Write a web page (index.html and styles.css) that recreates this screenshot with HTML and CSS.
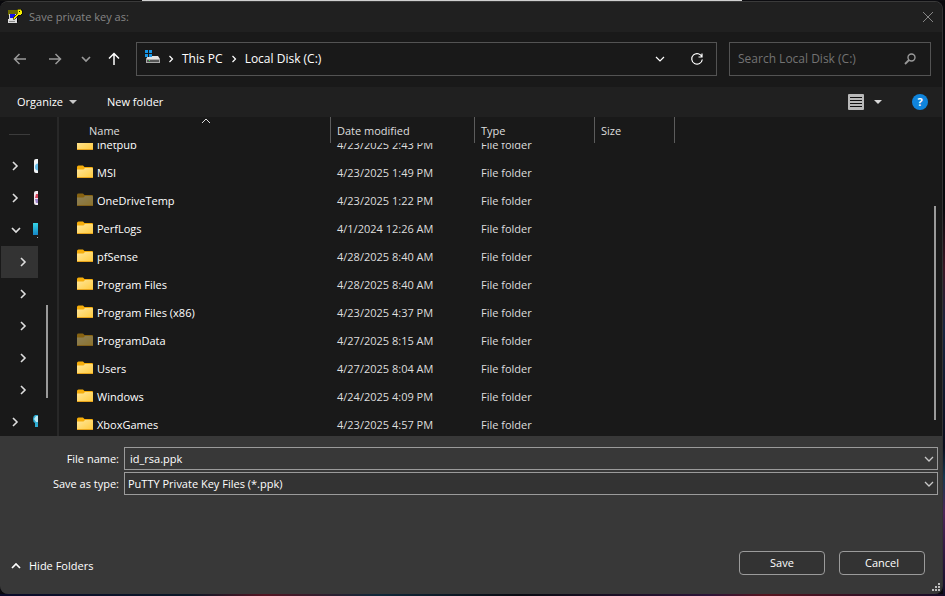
FILE: index.html
```html
<!DOCTYPE html>
<html lang="en">
<head>
<meta charset="utf-8">
<title>Save private key as:</title>
<link rel="stylesheet" href="styles.css">
</head>
<body>
<svg class="defs" width="0" height="0" aria-hidden="true">
  <defs>
    <linearGradient id="gold" x1="0" y1="0" x2="1" y2="1"><stop offset="0" stop-color="#ffe69b"/><stop offset="1" stop-color="#ffcb3d"/></linearGradient>
    <linearGradient id="screen" x1="0" y1="0" x2="0" y2="1"><stop offset="0" stop-color="#35d5e6"/><stop offset="1" stop-color="#1585c5"/></linearGradient>
    <symbol id="folder" viewBox="0 0 16 14"><path d="M0 2a1.500 1.500 0 0 1 1.500-1.500H6l1.500 1.500H15a1 1 0 0 1 1 1V12H0z" fill="#f5ad0b"/><path d="M0 4.500H6.500L8 3h7a1 1 0 0 1 1 1v8a1 1 0 0 1-1 1H1a1 1 0 0 1-1-1z" fill="url(#gold)"/><path d="M0 12.500h16" fill="none" stroke="#e8a41c"/></symbol>
    <symbol id="right" viewBox="0 0 8 10"><path d="M2 1l4 4-4 4" fill="none" stroke="currentColor" stroke-width="1.600"/></symbol>
    <symbol id="down" viewBox="0 0 10 8"><path d="M1 2l4 4 4-4" fill="none" stroke="currentColor" stroke-width="1.300"/></symbol>
    <symbol id="up" viewBox="0 0 10 8"><path d="M1 6l4-4 4 4" fill="none" stroke="currentColor" stroke-width="1.700"/></symbol>
  </defs>
</svg>
<main class="dialog">
  <header class="titlebar">
    <svg class="app-icon" width="16" height="16" viewBox="0 0 16 16" shape-rendering="crispEdges">
      <path d="M1 1h10v5H1z" fill="#6d6b00"/><path d="M2 5h8v5H2z" fill="#ddd"/><path d="M3 5h5v4H3z" fill="#1111ee"/>
      <path d="M1 10h9v4H1z" fill="#ddd"/><path d="M2 12h6v1H2z" fill="#888"/><path d="M10 9h1v4h-1z" fill="#000"/>
      <path d="M10 0h4v1h1v4h-1v1h-3v1h-1v1H9v1H8v1H6V8h1V7h1V6h1V5h1z" fill="#f5ee00" stroke="#000" stroke-width=".5"/><path d="M12 2h1v1h-1z" fill="#000"/>
    </svg>
    <h1>Save private key as:</h1>
    <button class="close" aria-label="Close"><svg width="12" height="12" viewBox="0 0 12 12"><path d="M1 1l10 10M11 1L1 11" stroke="currentColor"/></svg></button>
  </header>

  <nav class="navbar" aria-label="Location">
    <div class="arrows">
      <button class="dim" aria-label="Back"><svg width="14" height="12" viewBox="0 0 14 12"><path d="M13 6H1.500M6.500 1l-5 5 5 5" fill="none" stroke="currentColor" stroke-width="1.500"/></svg></button>
      <button class="dim" aria-label="Forward"><svg width="14" height="12" viewBox="0 0 14 12"><path d="M1 6h11.500M7.500 1l5 5-5 5" fill="none" stroke="currentColor" stroke-width="1.500"/></svg></button>
      <button class="dim narrow" aria-label="Recent locations"><svg width="10" height="8" viewBox="0 0 10 8"><path d="M1 2l4 4 4-4" fill="none" stroke="currentColor" stroke-width="1.700"/></svg></button>
      <button class="narrow" aria-label="Up"><svg width="12" height="14" viewBox="0 0 12 14"><path d="M6 13V1.500M1 6.500l5-5 5 5" fill="none" stroke="currentColor" stroke-width="1.500"/></svg></button>
    </div>
    <div class="address">
      <svg class="drive" width="15" height="16" viewBox="0 0 15 16"><path d="M3 6h10l2 3H1z" fill="#e2e2e2"/><path d="M1 9h14v4H1z" fill="#a9a9a9"/><path d="M2 10h12v2H2z" fill="#555"/><path d="M4 10h1v1H4z" fill="#43e04b"/><path d="M0 0h7v7H0z" fill="#191919"/><path d="M0 0h3v3H0zM4 0h3v3H4zM0 4h3v3H0zM4 4h3v3H4z" fill="#1595e6"/></svg>
      <svg class="crumb-sep" width="6" height="8"><use href="#right"/></svg>
      <a href="#pc">This PC</a>
      <svg class="crumb-sep" width="6" height="8"><use href="#right"/></svg>
      <a href="#c">Local Disk (C:)</a>
      <button class="history" aria-label="Previous locations"><svg width="10" height="8" viewBox="0 0 10 8"><path d="M1 2l4 4 4-4" fill="none" stroke="currentColor" stroke-width="1.200"/></svg></button>
      <button class="refresh" aria-label="Refresh"><svg width="14" height="14" viewBox="0 0 14 14"><path d="M12 5A5.300 5.300 0 1 0 12.300 7.500M12 1.500V5H8.500" fill="none" stroke="currentColor" stroke-width="1.200"/></svg></button>
    </div>
    <div class="search">
      <input type="search" placeholder="Search Local Disk (C:)" aria-label="Search Local Disk (C:)">
      <svg width="12" height="12" viewBox="0 0 12 12"><circle cx="7.500" cy="4.500" r="3.500" fill="none" stroke="currentColor" stroke-width="1.400"/><path d="M5 7L1 11" stroke="currentColor" stroke-width="1.800"/></svg>
    </div>
  </nav>

  <div class="toolbar">
    <button>Organize <svg width="8" height="4" viewBox="0 0 8 4"><path d="M0 0h8L4 4z" fill="#c8c8c8"/></svg></button>
    <button>New folder</button>
    <button class="view" aria-label="Change your view"><svg width="16" height="16" viewBox="0 0 16 16"><rect width="16" height="16" rx="1" fill="#b9b9b9"/><path d="M2 3.500h12M2 6.500h12M2 9.500h12M2 12.500h12" stroke="#111"/></svg><svg width="8" height="4" viewBox="0 0 8 4"><path d="M0 0h8L4 4z" fill="#d8d8d8"/></svg></button>
    <button class="help" aria-label="Get help">?</button>
  </div>

  <section class="browser">
    <aside class="sidebar">
      <div class="tree">
        <hr>
        <button aria-label="Expand"><svg width="8" height="10"><use href="#right"/></svg><svg class="peek" width="5" height="16" viewBox="1 0 5 16"><path d="M6 1H4Q2 1 2 3v10q0 2 2 2h2z" fill="#f2f5f7"/><circle cx="6.500" cy="9" r="3.500" fill="#66bde8"/></svg></button>
        <button aria-label="Expand"><svg width="8" height="10"><use href="#right"/></svg><svg class="peek" width="5" height="16" viewBox="1 0 5 16"><path d="M6 1H4Q2 1 2 3v10q0 2 2 2h2z" fill="#f2e8ef"/><path d="M4 4h2v4H3z" fill="#d6455c"/><path d="M3 9h3v4H4z" fill="#9a82c9"/></svg></button>
        <button aria-label="Collapse"><svg width="10" height="8" viewBox="0 0 10 8"><path d="M1 2l4 4 4-4" fill="none" stroke="currentColor" stroke-width="1.700"/></svg><svg class="peek" width="5" height="16" viewBox="1 0 5 16"><path d="M1 1h5v12H1z" fill="url(#screen)"/><path d="M5 15h1v1H5z" fill="#aaa"/></svg></button>
        <button class="nested selected" aria-label="Expand"><svg width="8" height="10"><use href="#right"/></svg></button>
        <button class="nested" aria-label="Expand"><svg width="8" height="10"><use href="#right"/></svg></button>
        <button class="nested" aria-label="Expand"><svg width="8" height="10"><use href="#right"/></svg></button>
        <button class="nested" aria-label="Expand"><svg width="8" height="10"><use href="#right"/></svg></button>
        <button class="nested" aria-label="Expand"><svg width="8" height="10"><use href="#right"/></svg></button>
        <button aria-label="Expand"><svg width="8" height="10"><use href="#right"/></svg><svg class="peek" width="5" height="16" viewBox="1 0 5 16"><path d="M6 1H3Q1 2 1 5q0 3 2 4v4h3z" fill="#2cabd1"/><path d="M6 2H4L2 5l2 3h2z" fill="#b9e9f5"/></svg></button>
      </div>
      <div class="thumb"></div>
    </aside>
    <div class="files">
      <table>
        <thead><tr><th>Name<svg class="sort" width="10" height="8" viewBox="0 0 10 8"><path d="M1 6l4-4 4 4" fill="none" stroke="currentColor"/></svg></th><th>Date modified</th><th>Type</th><th>Size</th></tr></thead>
        <tbody>
          <tr><td><svg width="16" height="14"><use href="#folder"/></svg>inetpub</td><td>4/23/2025 2:43 PM</td><td>File folder</td><td></td></tr>
          <tr><td><svg width="16" height="14"><use href="#folder"/></svg>MSI</td><td>4/23/2025 1:49 PM</td><td>File folder</td><td></td></tr>
          <tr class="hidden-item"><td><svg width="16" height="14"><use href="#folder"/></svg>OneDriveTemp</td><td>4/23/2025 1:22 PM</td><td>File folder</td><td></td></tr>
          <tr><td><svg width="16" height="14"><use href="#folder"/></svg>PerfLogs</td><td>4/1/2024 12:26 AM</td><td>File folder</td><td></td></tr>
          <tr><td><svg width="16" height="14"><use href="#folder"/></svg>pfSense</td><td>4/28/2025 8:40 AM</td><td>File folder</td><td></td></tr>
          <tr><td><svg width="16" height="14"><use href="#folder"/></svg>Program Files</td><td>4/28/2025 8:40 AM</td><td>File folder</td><td></td></tr>
          <tr><td><svg width="16" height="14"><use href="#folder"/></svg>Program Files (x86)</td><td>4/23/2025 4:37 PM</td><td>File folder</td><td></td></tr>
          <tr class="hidden-item"><td><svg width="16" height="14"><use href="#folder"/></svg>ProgramData</td><td>4/27/2025 8:15 AM</td><td>File folder</td><td></td></tr>
          <tr><td><svg width="16" height="14"><use href="#folder"/></svg>Users</td><td>4/27/2025 8:04 AM</td><td>File folder</td><td></td></tr>
          <tr><td><svg width="16" height="14"><use href="#folder"/></svg>Windows</td><td>4/24/2025 4:09 PM</td><td>File folder</td><td></td></tr>
          <tr><td><svg width="16" height="14"><use href="#folder"/></svg>XboxGames</td><td>4/23/2025 4:57 PM</td><td>File folder</td><td></td></tr>
        </tbody>
      </table>
      <div class="thumb"></div>
    </div>
  </section>

  <form class="save-form">
    <div class="fields">
      <label for="name">File name:</label>
      <div class="field"><input id="name" type="text" value="id_rsa.ppk"><svg width="10" height="8"><use href="#down"/></svg></div>
      <label for="type">Save as type:</label>
      <div class="field type"><select id="type"><option>PuTTY Private Key Files (*.ppk)</option></select><svg width="10" height="8"><use href="#down"/></svg></div>
    </div>
    <div class="actions">
      <button type="button" class="hide"><svg width="10" height="8"><use href="#up"/></svg>Hide Folders</button>
      <button type="button" class="push">Save</button>
      <button type="button" class="push">Cancel</button>
    </div>
    <svg class="grip" width="8" height="8" viewBox="0 0 8 8"><path d="M6 0h2v2H6zM3 3h2v2H3zM6 3h2v2H6zM0 6h2v2H0zM3 6h2v2H3zM6 6h2v2H6z" fill="#bdbdbd"/></svg>
  </form>
</main>
</body>
</html>
```
FILE: styles.css
```css
* { box-sizing: border-box; }

body {
  margin: 0;
  height: 100vh;
  padding: 1px 2px 2px 0;
  display: flex;
  overflow: hidden;
  color: #fff;
  font: 11px/16px "Open Sans", "Noto Sans", sans-serif;
  background:
    linear-gradient(90deg, #111 15%, #d0d0d0 15% 78.5%, #0c0c10 78.5%) top / 100% 1px no-repeat,
    linear-gradient(#08080c 35%, #3a1524 45%, #182440 55%, #0a0c1c 75%, #163850 80%, #4c2558 86%, #120e28) right / 2px 100% no-repeat,
    linear-gradient(90deg, #0a0a2a, #0b1828 20%, #551422 28%, #10283a 40%, #0a0a12 55%, #2d1438 75%, #58141f 81%, #180c28) bottom / 100% 2px no-repeat,
    #08080c;
}

.defs { position: absolute; }
svg { flex: none; display: block; }

button, input, select {
  font: inherit;
  color: inherit;
  background: none;
  border: 0;
  padding: 0;
  margin: 0;
  outline: 0;
}

button { display: flex; align-items: center; justify-content: center; }
a { color: inherit; text-decoration: none; }

.dialog {
  flex: 1;
  display: flex;
  flex-direction: column;
  overflow: hidden;
  background: #191919;
  border-radius: 8px;
  border-top: 1px solid #3a3a3a;
  border-right: 1px solid #333;
}

.titlebar {
  display: flex;
  align-items: center;
  height: 30px;
  padding: 0 8px 0 7px;
  gap: 6px;
  background: #202020;
  color: #858585;
}
.titlebar h1 { flex: 1; margin: 0; font: inherit; }
.close { width: 12px; height: 12px; }

.navbar {
  display: flex;
  align-items: center;
  height: 55px;
  padding: 0 11px 2px 2px;
  font-size: 12px;
}
.arrows { display: flex; margin-right: 8px; }
.arrows button { width: 35px; height: 28px; }
.arrows .narrow { width: 28px; }
.arrows .dim { color: #999; }

.address, .search {
  display: flex;
  align-items: center;
  height: 34px;
  border: 1px solid #535353;
}
.address { flex: 1; padding: 0 9px 0 8px; gap: 8px; }
.drive { align-self: flex-start; margin-top: 7px; }
.history { margin-left: auto; width: 20px; height: 24px; }
.refresh { width: 20px; height: 24px; margin-left: 9px; }
.search { width: 202px; margin-left: 12px; padding: 0 14px 0 8px; color: #999; }
.search input { flex: 1; min-width: 0; }
.search input::placeholder { color: #737373; opacity: 1; }

.toolbar {
  display: flex;
  align-items: center;
  height: 30px;
  padding: 0 14px 0 17px;
  gap: 30px;
  background: #202020;
}
.toolbar button { gap: 6px; }
.toolbar .view { margin-left: auto; gap: 10px; }
.toolbar .help {
  width: 16px;
  height: 16px;
  border-radius: 50%;
  background: #0f84dc;
  font-weight: 700;
}

.browser { flex: 1; min-height: 0; display: flex; }

.sidebar {
  position: relative;
  width: 59px;
  border-right: 2px solid #282828;
}
.tree { width: 38px; padding: 0 0 0 1px; overflow: hidden; }
.tree hr { width: 21px; height: 1px; margin: 17px 0 15px 8px; border: 0; background: #3b3b3b; }
.tree button {
  width: 100%;
  height: 32px;
  padding-left: 10px;
  justify-content: space-between;
  color: #dedede;
}
.tree .nested { padding-left: 18px; }
.tree .selected { background: #333; }
.thumb { position: absolute; width: 2px; background: #9a9a9a; }
.sidebar .thumb { left: 46px; top: 59%; height: 29%; }

.files { position: relative; flex: 1; overflow: hidden; }
.files > .thumb { right: 6px; top: 28%; height: 67%; }
.files table { display: flex; flex-direction: column; height: 100%; }
.files tr { display: grid; grid-template-columns: 272px 144px 120px 80px; }
.files th {
  position: relative;
  height: 26px;
  padding: 6px 0 0 6px;
  border-right: 1px solid #5c5c5c;
  text-align: left;
  font-weight: 400;
  color: #dedede;
}
.files th:first-child { padding-left: 30px; }
.sort { position: absolute; left: 142px; top: 0; }
.files tbody {
  flex: 1;
  min-height: 0;
  display: flex;
  flex-direction: column;
  justify-content: flex-end;
  overflow: hidden;
  margin-bottom: -3px;
}
.files tbody tr { flex: none; height: 28px; }
.files td {
  display: flex;
  align-items: center;
  padding: 0 0 0 6px;
  color: #dedede;
}
.files td svg { margin-bottom: 2px; }
.files td:first-child { padding-left: 18px; gap: 4px; color: #fff; }
.hidden-item svg { opacity: .5; }

.save-form {
  position: relative;
  height: 158px;
  padding: 11px 4px 19px 0;
  display: flex;
  flex-direction: column;
  justify-content: space-between;
  background: #383838;
}
.fields {
  display: grid;
  grid-template-columns: 119px 1fr;
  column-gap: 5px;
  row-gap: 2px;
  align-items: center;
}
.fields label { text-align: right; }
.field {
  display: flex;
  align-items: center;
  height: 23px;
  padding: 0 3px 0 5px;
  border: 1px solid #9b9b9b;
  background: #383838;
  color: #c8c8c8;
}
.field.type { padding-left: 3px; background: #333; }
.field input, .field select { flex: 1; min-width: 0; appearance: none; color: #fff; }

.actions { display: flex; align-items: center; gap: 14px; padding-right: 13px; }
.hide { gap: 8px; margin: 6px auto 0 11px; }
.push {
  width: 86px;
  height: 24px;
  border: 1px solid #9b9b9b;
  border-radius: 4px;
  background: #333;
}
.grip { position: absolute; right: 2px; bottom: 3px; }
```
